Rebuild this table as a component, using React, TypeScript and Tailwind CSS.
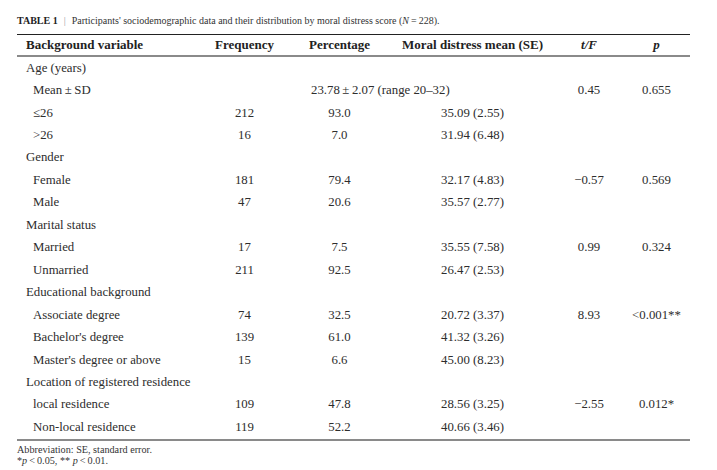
import React from 'react';

type Row = {
  label: string;
  group?: boolean;
  freq?: string;
  pct?: string;
  mean?: string;
  span?: string;
  t?: string;
  p?: string;
};

const rows: Row[] = [
  { label: 'Age (years)', group: true },
  { label: 'Mean\u2009\u00b1\u2009SD', span: '23.78\u2009\u00b1\u20092.07 (range 20\u201332)', t: '0.45', p: '0.655' },
  { label: '\u226426', freq: '212', pct: '93.0', mean: '35.09 (2.55)' },
  { label: '>26', freq: '16', pct: '7.0', mean: '31.94 (6.48)' },
  { label: 'Gender', group: true },
  { label: 'Female', freq: '181', pct: '79.4', mean: '32.17 (4.83)', t: '\u22120.57', p: '0.569' },
  { label: 'Male', freq: '47', pct: '20.6', mean: '35.57 (2.77)' },
  { label: 'Marital status', group: true },
  { label: 'Married', freq: '17', pct: '7.5', mean: '35.55 (7.58)', t: '0.99', p: '0.324' },
  { label: 'Unmarried', freq: '211', pct: '92.5', mean: '26.47 (2.53)' },
  { label: 'Educational background', group: true },
  { label: 'Associate degree', freq: '74', pct: '32.5', mean: '20.72 (3.37)', t: '8.93', p: '<0.001**' },
  { label: "Bachelor's degree", freq: '139', pct: '61.0', mean: '41.32 (3.26)' },
  { label: "Master's degree or above", freq: '15', pct: '6.6', mean: '45.00 (8.23)' },
  { label: 'Location of registered residence', group: true },
  { label: 'local residence', freq: '109', pct: '47.8', mean: '28.56 (3.25)', t: '\u22122.55', p: '0.012*' },
  { label: 'Non-local residence', freq: '119', pct: '52.2', mean: '40.66 (3.46)' },
];

const cols = 'grid grid-cols-[183px_89px_101px_165px_68px_67px] items-center';

export default function App() {
  return (
    <div
      className="w-[717px] h-[470px] bg-white text-[#2d2d2d] pl-[17px] overflow-hidden"
      style={{ fontFamily: '"Liberation Serif", "Times New Roman", serif' }}
    >
      {/* Caption */}
      <div className="h-[34px] pt-[14px] text-[10px] leading-[13px] text-[#333] whitespace-nowrap">
        <span className="font-bold text-[#222]">TABLE 1</span>
        <span className="mx-[6px] text-[#999]">|</span>
        Participants' sociodemographic data and their distribution by moral distress score (<i>N</i>&thinsp;=&thinsp;228).
      </div>

      <div className="w-[673px]">
        {/* Header */}
        <div className={`${cols} h-[23px] border-t border-[#222] border-b-2 border-b-[#8a8a8a] font-bold text-[13px] text-[#222]`}>
          <div className="pl-[9px]">Background variable</div>
          <div className="text-center">Frequency</div>
          <div className="text-center">Percentage</div>
          <div className="text-center">Moral distress mean (SE)</div>
          <div className="text-center italic">t/F</div>
          <div className="text-center italic">p</div>
        </div>

        {/* Body */}
        <div className="border-b-2 border-[#8a8a8a] text-[12.8px]">
          {rows.map((r, i) => (
            <div key={i} className={`${cols} h-[22.46px]`}>
              <div className={r.group ? 'pl-[9px]' : 'pl-[16px]'}>{r.label}</div>
              {r.span ? (
                <div className="col-span-3 pl-[111px] text-left whitespace-nowrap">{r.span}</div>
              ) : (
                <>
                  <div className="text-center">{r.freq}</div>
                  <div className="text-center">{r.pct}</div>
                  <div className="text-center">{r.mean}</div>
                </>
              )}
              <div className="text-center">{r.t}</div>
              <div className="text-center">{r.p}</div>
            </div>
          ))}
        </div>

        {/* Footnotes */}
        <div className="pt-[3px] text-[10.2px] leading-[11.5px] text-[#333]">
          <div>Abbreviation: SE, standard error.</div>
          <div>
            *<i>p</i>&thinsp;&lt;&thinsp;0.05, ** <i>p</i>&thinsp;&lt;&thinsp;0.01.
          </div>
        </div>
      </div>
    </div>
  );
}
